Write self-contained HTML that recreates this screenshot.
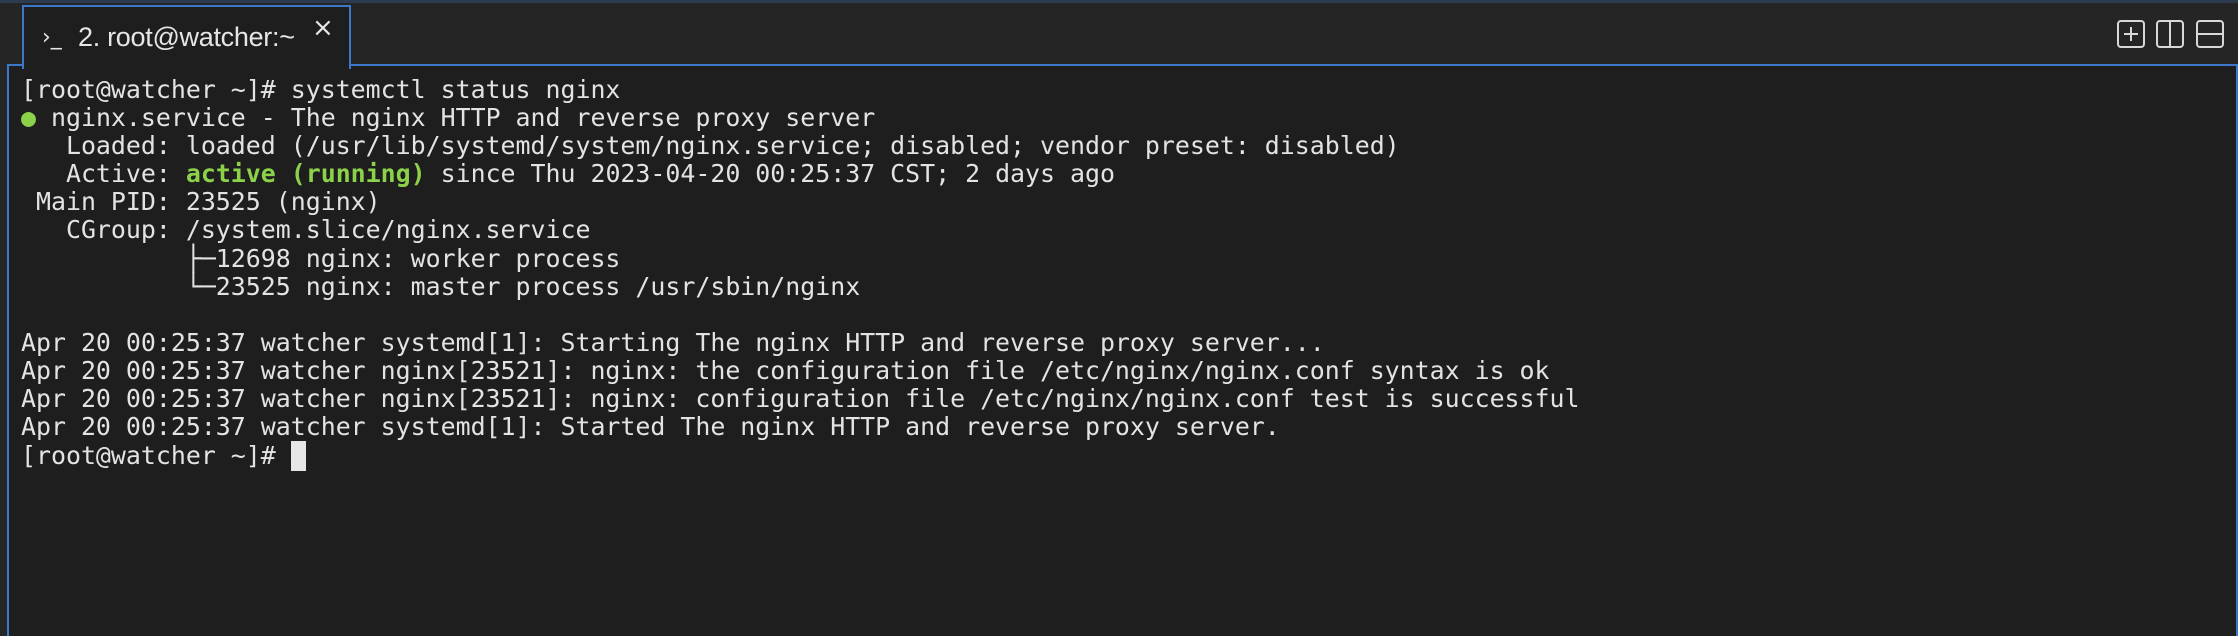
<!DOCTYPE html>
<html><head><meta charset="utf-8"><style>
html,body{margin:0;padding:0;width:2238px;height:626px;overflow:hidden;background:#252526;}
.top{position:absolute;left:0;top:0;width:2238px;height:3px;background:#2c3b4f;}
.term{position:absolute;left:7px;top:64px;width:2227px;height:570px;background:#1e1e1e;border:2px solid #3b78c9;border-bottom:none;}
.tab{position:absolute;left:22px;top:5px;width:325px;height:62px;background:#1e1e1e;border:2px solid #3b78c9;border-bottom:none;z-index:2;}
.tab .t{position:absolute;left:54px;top:15px;font:27px "Liberation Sans",sans-serif;color:#e6e6e6;white-space:nowrap;letter-spacing:-0.3px}
.tab .i{position:absolute;left:18px;top:18px;font:22px "DejaVu Sans",sans-serif;color:#e6e6e6;}
.tab .x{position:absolute;left:288px;top:6px;font:26px "DejaVu Sans",sans-serif;color:#e6e6e6;}
pre{position:absolute;left:21px;top:76px;margin:0;font:24.9px/28.1px "DejaVu Sans Mono",monospace;color:#e3e3e3;z-index:3}
.g{color:#8bd14a;font-weight:bold}
.d{color:#8bd14a}
.cur{display:inline-block;width:15px;height:30px;background:#e6e6e6;vertical-align:-7px}
.ic{position:absolute;top:20px;width:25px;height:25px;border:2px solid #d8d8d8;border-radius:4px;box-sizing:border-box}
</style></head><body>
<div class="top"></div>
<div class="term"></div>
<div class="tab"><span class="i">›_</span><span class="t">2. root@watcher:~</span><span class="x">×</span></div>
<div class="ic" style="left:2117px;width:28px;height:28px"><svg width="24" height="24" style="position:absolute;left:0;top:0"><path d="M12 5V19M5 12H19" stroke="#d8d8d8" stroke-width="2"/></svg></div>
<div class="ic" style="left:2156px;width:28px;height:28px"><div style="position:absolute;left:11px;top:0;width:2px;height:24px;background:#d8d8d8"></div></div>
<div class="ic" style="left:2196px;width:28px;height:28px"><div style="position:absolute;left:0;top:11px;width:24px;height:2px;background:#d8d8d8"></div></div>
<pre>[root@watcher ~]# systemctl status nginx
<span class="d">●</span> nginx.service - The nginx HTTP and reverse proxy server
   Loaded: loaded (/usr/lib/systemd/system/nginx.service; disabled; vendor preset: disabled)
   Active: <span class="g">active (running)</span> since Thu 2023-04-20 00:25:37 CST; 2 days ago
 Main PID: 23525 (nginx)
   CGroup: /system.slice/nginx.service
           ├─12698 nginx: worker process
           └─23525 nginx: master process /usr/sbin/nginx

Apr 20 00:25:37 watcher systemd[1]: Starting The nginx HTTP and reverse proxy server...
Apr 20 00:25:37 watcher nginx[23521]: nginx: the configuration file /etc/nginx/nginx.conf syntax is ok
Apr 20 00:25:37 watcher nginx[23521]: nginx: configuration file /etc/nginx/nginx.conf test is successful
Apr 20 00:25:37 watcher systemd[1]: Started The nginx HTTP and reverse proxy server.
[root@watcher ~]# <span class="cur"></span></pre>
</body></html>
